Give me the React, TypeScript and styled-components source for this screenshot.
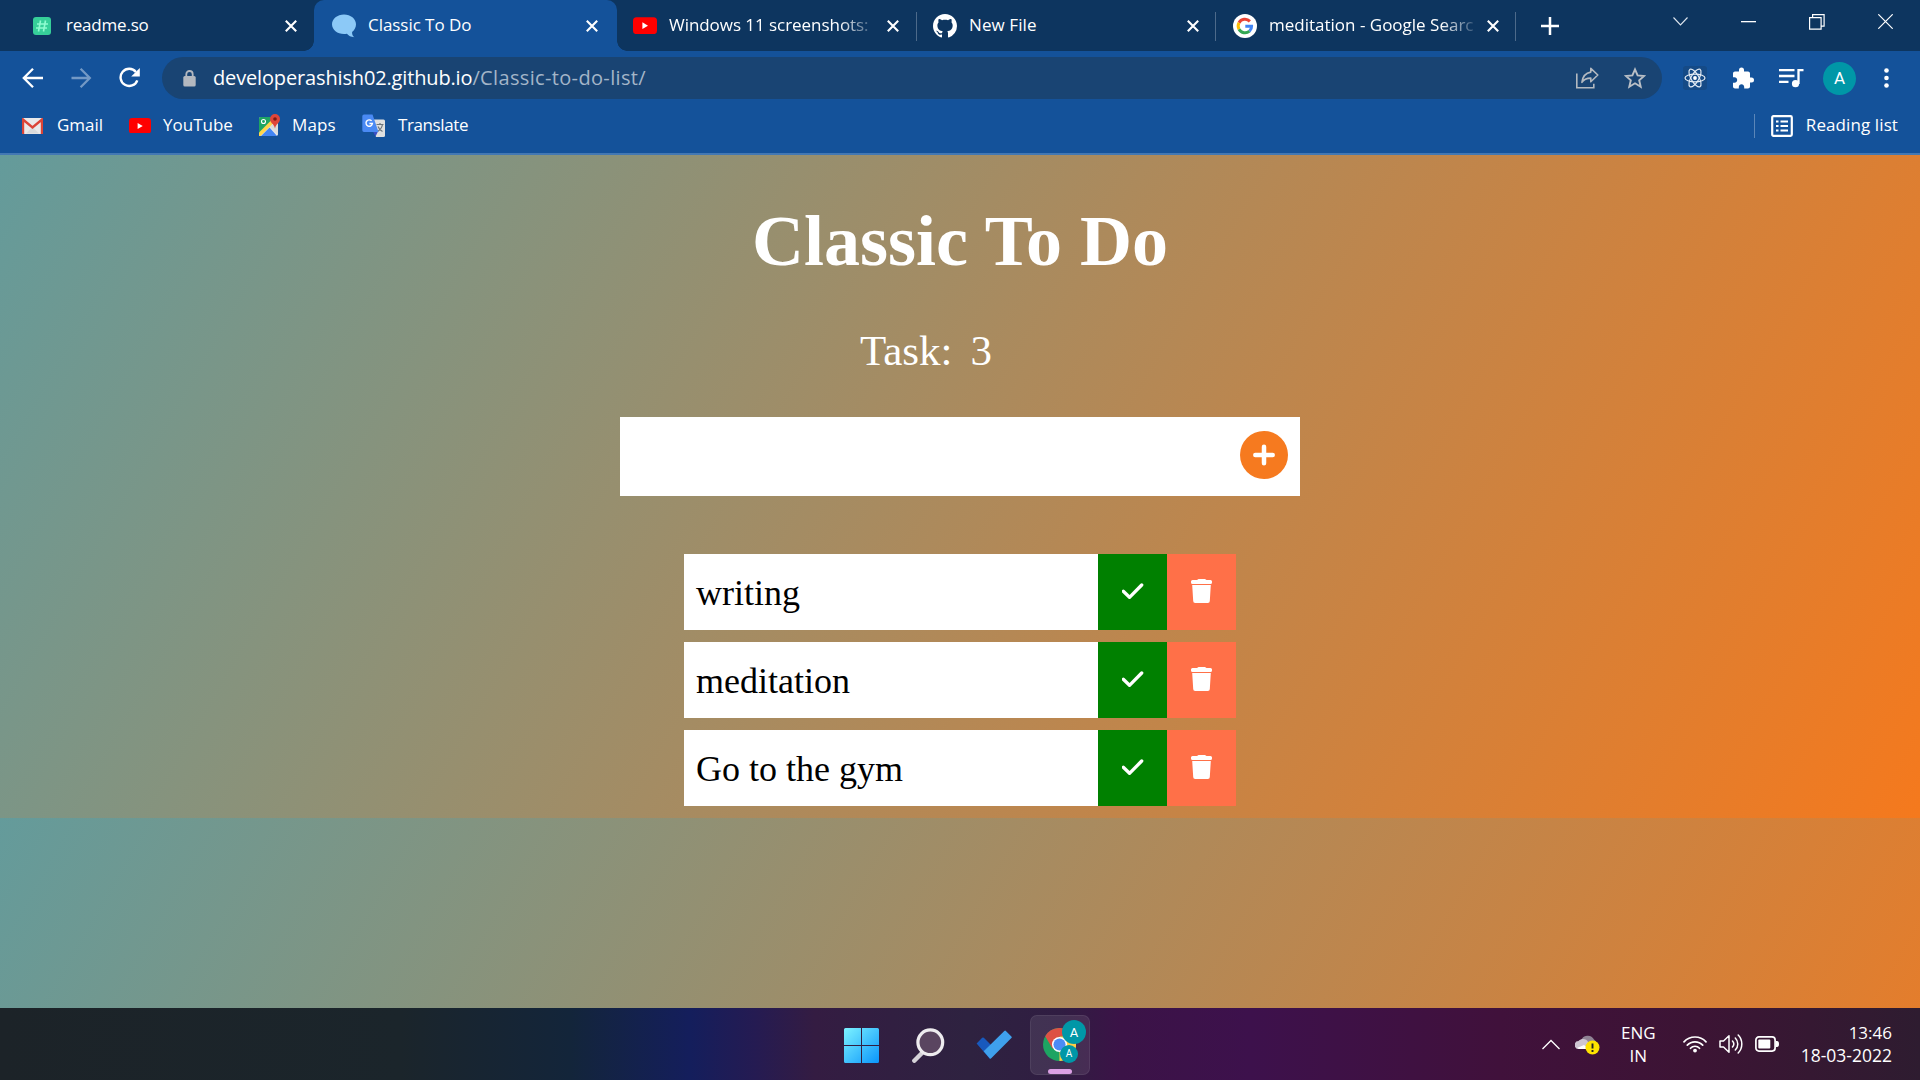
import React from "react";
import styled, { createGlobalStyle } from "styled-components";

const ui = '"Open Sans", "Noto Sans", sans-serif';
const times = '"Liberation Serif", "Times New Roman", serif';

const Global = createGlobalStyle`
  * { box-sizing: border-box; }
  html, body { margin: 0; padding: 0; background: #14529a; }
  svg { display: block; flex: none; }
`;

const Screen = styled.div`
  width: 1920px;
  height: 1080px;
  display: flex;
  flex-direction: column;
  overflow: hidden;
  font-family: ${ui};
  color: #fff;
`;

const Label = styled.span<{ $track?: number; $size?: number; $w?: number; $fade?: boolean }>`
  font-size: ${(p) => p.$size ?? 17}px;
  letter-spacing: ${(p) => p.$track ?? 0}px;
  line-height: 22px;
  padding-bottom: 1px;
  white-space: nowrap;
  flex: none;
  ${(p) => (p.$w ? `width: ${p.$w}px; overflow: hidden;` : "")}
  ${(p) => (p.$fade ? "mask-image: linear-gradient(90deg, #000 84%, transparent 104%);" : "")}
`;

const TabStrip = styled.div`
  height: 51px;
  flex: none;
  display: flex;
  background: #0d355f;
`;

const Tab = styled.div<{ $w: number; $active?: boolean; $sep?: boolean; $pad: number }>`
  position: relative;
  width: ${(p) => p.$w}px;
  height: 51px;
  flex: none;
  display: flex;
  align-items: center;
  padding-left: ${(p) => p.$pad}px;
  ${(p) =>
    p.$active
      ? `background: #14529a; border-radius: 10px 10px 0 0;
    &::before, &::after { content: ""; position: absolute; bottom: 0; width: 10px; height: 10px; }
    &::before { left: -10px; background: radial-gradient(circle at 0 0, transparent 9.5px, #14529a 10px); }
    &::after { right: -10px; background: radial-gradient(circle at 100% 0, transparent 9.5px, #14529a 10px); }`
      : ""}
  ${(p) => (p.$sep ? `&::after { content: ""; position: absolute; right: 0; top: 12px; width: 1.5px; height: 29px; background: #4d6a8a; }` : "")}
`;

const TabIcon = styled.div`
  width: 24px;
  height: 24px;
  margin-right: 12px;
  display: grid;
  place-items: center;
  flex: none;
`;

const TabTitle = styled.div`
  width: 205px;
  flex: none;
  display: flex;
`;

const CloseBox = styled.div<{ $ml?: number }>`
  width: 37px;
  display: grid;
  place-items: center;
  margin-left: ${(p) => p.$ml ?? 0}px;
`;

const WindowButtons = styled.div`
  margin-left: auto;
  display: flex;
  height: 43px;
  align-items: center;
`;

const WinButton = styled.div<{ $w: number }>`
  width: ${(p) => p.$w}px;
  display: grid;
  place-items: center;
`;

const Toolbar = styled.div`
  height: 54px;
  flex: none;
  display: flex;
  align-items: center;
  background: #14529a;
  padding-left: 20px;
`;

const ToolSlot = styled.div<{ $w: number }>`
  width: ${(p) => p.$w}px;
  height: 42px;
  flex: none;
  display: grid;
  align-items: center;
  justify-items: start;
`;

const Omnibox = styled.div`
  width: 1500px;
  height: 42px;
  border-radius: 21px;
  background: #194473;
  display: flex;
  align-items: center;
  padding: 0 16px 0 21px;
  flex: none;
  margin-right: 21px;
`;

const Url = styled.div`
  flex: 1;
  margin-left: 17px;
  display: flex;
  padding-top: 1px;
`;

const Dim = styled.span`
  color: #a3b5c8;
  letter-spacing: 0.35px;
`;

const OmniIcons = styled.div`
  display: flex;
  align-items: center;
  gap: 25px;
`;

const Extension = styled.div`
  width: 24px;
  height: 24px;
  border-radius: 3px;
  background: #154a86;
  display: grid;
  place-items: center;
`;

const Avatar = styled.div<{ $size: number; $font: number }>`
  width: ${(p) => p.$size}px;
  height: ${(p) => p.$size}px;
  border-radius: 50%;
  background: #0097a7;
  color: #fff;
  font: ${(p) => p.$font}px/1 Roboto, sans-serif;
  display: grid;
  place-items: center;
`;

const Bookmarks = styled.div`
  height: 50px;
  flex: none;
  display: flex;
  align-items: center;
  padding: 0 22px 7px 22px;
  background: #14529a;
  border-bottom: 2px solid #4378b3;
`;

const Bookmark = styled.div<{ $w: number; $gap: number }>`
  width: ${(p) => p.$w}px;
  display: flex;
  align-items: center;
  gap: ${(p) => p.$gap}px;
`;

const ReadingList = styled.div`
  margin-left: auto;
  display: flex;
  align-items: center;
  height: 24px;
  padding-left: 16px;
  gap: 13px;
  border-left: 1px solid #5b86b8;
`;

const Page = styled.main`
  height: 853px;
  flex: none;
  display: flex;
  flex-direction: column;
  align-items: center;
  font-family: ${times};
  background: linear-gradient(120deg, #649b9b, #f5791d) 0 0 / 100% 663px repeat-y;
`;

const Heading = styled.h1`
  margin: 45px 0 0;
  font-size: 72px;
  line-height: 82px;
  font-weight: 700;
`;

const Counter = styled.div`
  margin-top: 44px;
  width: 200px;
  font-size: 43px;
  line-height: 50px;
  display: flex;
  gap: 18px;
`;

const Entry = styled.div`
  margin-top: 41px;
  width: 680px;
  height: 79px;
  background: #fff;
  display: flex;
  justify-content: flex-end;
  padding: 14px 12px 0 0;
`;

const TaskList = styled.div`
  margin-top: 58px;
  display: flex;
  flex-direction: column;
  gap: 12px;
`;

const TaskRow = styled.div`
  display: flex;
  width: 552px;
  height: 76px;
  background: #fff;
`;

const TaskText = styled.div`
  width: 414px;
  padding: 18px 0 0 12px;
  font-size: 36px;
  line-height: 42px;
  color: #000;
`;

const TaskButton = styled.div<{ $color: string }>`
  width: 69px;
  display: flex;
  padding: 25px 0 0 24px;
  background: ${(p) => p.$color};
`;

const Taskbar = styled.footer`
  height: 72px;
  flex: none;
  display: grid;
  grid-template-columns: 1fr auto 1fr;
  align-items: center;
  background: linear-gradient(90deg, #1c2328 0, #1b252b 400px, #13253a 570px, #141e5c 690px, #251b52 755px, #341c42 815px, #2e2240 970px, #301d42 1060px, #3b1347 1120px, #3d114c 1250px, #40113b 1500px, #3c1434 1700px, #2e1c30 1920px);
`;

const Apps = styled.div`
  grid-column: 2;
  display: flex;
  align-items: center;
  padding: 2px 0 0 14px;
`;

const AppSlot = styled.div<{ $w: number }>`
  width: ${(p) => p.$w}px;
  height: 60px;
  display: grid;
  align-items: center;
`;

const ActiveApp = styled.div`
  position: relative;
  width: 60px;
  height: 60px;
  border-radius: 7px;
  background: rgba(255, 255, 255, 0.09);
  border: 1px solid rgba(255, 255, 255, 0.07);
  &::after {
    content: "";
    position: absolute;
    left: 17px;
    bottom: 0;
    width: 24px;
    height: 5px;
    border-radius: 3px;
    background: #dba0e4;
  }
`;

const Pin = styled.div<{ $x: number; $y: number }>`
  position: absolute;
  left: ${(p) => p.$x}px;
  top: ${(p) => p.$y}px;
`;

const Tray = styled.div`
  grid-column: 3;
  display: flex;
  align-items: center;
  justify-content: flex-end;
  padding-right: 28px;
`;

const TrayItem = styled.div<{ $mr: number; $align?: string }>`
  display: flex;
  flex-direction: column;
  align-items: ${(p) => p.$align ?? "center"};
  margin-right: ${(p) => p.$mr}px;
`;

const TrayText = styled.span<{ $size?: number }>`
  font-size: ${(p) => p.$size ?? 17}px;
  line-height: 23px;
  white-space: nowrap;
`;

const Close = () => (
  <svg width="12" height="12" viewBox="0 0 12 12" stroke="#fff" strokeWidth="2.1">
    <path d="M.8.8 11.2 11.2M11.2.8.8 11.2" />
  </svg>
);

const YouTube = ({ w = 24 }: { w?: number }) => (
  <svg width={w} height={w * 0.72} viewBox="0 0 24 17">
    <rect width="24" height="17" rx="3.5" fill="#f00" />
    <path d="M9.4 5.2 15 8.5 9.4 11.8z" fill="#fff" />
  </svg>
);

const Readme = () => (
  <svg width="24" height="24" viewBox="0 0 24 24">
    <rect x="3" y="3" width="18" height="18" rx="3" fill="#36cf99" />
    <path d="M10.5 6.5 8.5 17.5M15.5 6.5 13.5 17.5M7 10h11M6 14h11" stroke="#8ffbd0" strokeWidth="1.6" />
  </svg>
);

const Bubble = () => (
  <svg width="24" height="24" viewBox="0 0 24 24">
    <path d="M12 .6C5.400.6 0 4.900 0 10.300c0 5.500 5.400 9.800 12 9.800 1 0 2-.1 2.900-.3 1.500 1.900 4 3.300 7.500 3.400-1.900-1.300-2.400-3-2.300-5.300C22.500 16.200 24 13.500 24 10.300 24 4.900 18.600.6 12 .6z" fill="#8cc9f7" />
  </svg>
);

const GitHub = () => (
  <svg width="24" height="24" viewBox="0 0 16 16" fill="#fff">
    <path d="M8 0C3.580 0 0 3.580 0 8c0 3.540 2.290 6.530 5.470 7.590.4.070.55-.17.55-.38 0-.19-.01-.82-.01-1.490-2.010.37-2.530-.49-2.690-.94-.09-.23-.48-.94-.82-1.130-.28-.15-.68-.52-.01-.53.63-.01 1.080.58 1.230.82.72 1.210 1.870.87 2.330.66.070-.52.28-.87.51-1.070-1.780-.2-3.640-.89-3.640-3.950 0-.87.31-1.590.82-2.150-.08-.2-.36-1.020.08-2.120 0 0 .67-.21 2.200.82.64-.18 1.320-.27 2-.27s1.360.09 2 .27c1.530-1.040 2.200-.82 2.200-.82.44 1.100.16 1.920.08 2.120.51.56.82 1.270.82 2.150 0 3.070-1.870 3.750-3.650 3.950.29.25.54.73.54 1.480 0 1.070-.01 1.930-.01 2.200 0 .21.15.46.55.38A8.010 8.010 0 0 0 16 8c0-4.420-3.580-8-8-8z" />
  </svg>
);

const Google = () => (
  <svg width="24" height="24" viewBox="0 0 24 24" fill="none" strokeWidth="3">
    <circle cx="12" cy="12" r="12" fill="#fff" />
    <path d="M16.900 7.400A6.800 6.800 0 0 0 6 8.800" stroke="#ea4335" />
    <path d="M6 8.800a6.800 6.800 0 0 0 0 6.400" stroke="#fbbc05" />
    <path d="M6 15.200a6.800 6.800 0 0 0 10.500 1.900" stroke="#34a853" />
    <path d="M16.500 17.100c1.500-1.300 2.200-3 2.100-4.900H12.300" stroke="#4285f4" />
  </svg>
);

const NavArrow = ({ flip }: { flip?: boolean }) => (
  <svg width="26" height="26" viewBox="0 0 26 26" fill="none" stroke={flip ? "#7399c5" : "#fff"} strokeWidth="2.3">
    <path d={flip ? "M2.500 13h18M11.600 3.800 20.800 13 11.600 22.200" : "M23 13H4.500M13 3.800 3.800 13 13 22.200"} />
  </svg>
);

const Reload = () => (
  <svg width="22" height="22" viewBox="0 0 22 22">
    <path d="M18.300 13.300A8.600 8.600 0 1 1 16.900 5" fill="none" stroke="#fff" strokeWidth="2.400" />
    <path d="M20.800 1v8.600h-8.600z" fill="#fff" />
  </svg>
);

const Lock = () => (
  <svg width="13" height="17" viewBox="0 0 13 17">
    <path d="M3.300 7V4.200a3.200 3.200 0 0 1 6.400 0V7" fill="none" stroke="#b3b8bf" strokeWidth="1.800" />
    <rect x=".3" y="6" width="12.400" height="10.500" rx="1.500" fill="#b3b8bf" />
  </svg>
);

const Share = () => (
  <svg width="24" height="24" viewBox="0 0 24 24" fill="none" stroke="#b3b9c0" strokeWidth="1.600">
    <path d="M1.800 7.500v14.200h17v-4" />
    <path d="M15.800 2.300 22.800 9l-7 6.800v-3.700c-4.300 0-7 1-8.900 4.200.7-5.700 4-9.400 8.900-10.200z" strokeLinejoin="round" />
  </svg>
);

const Star = () => (
  <svg width="22" height="22" viewBox="0 0 22 22" fill="none" stroke="#b9bfc6" strokeWidth="1.900">
    <path d="M11 2.400l2.600 6 6.500.6-4.900 4.300 1.500 6.400-5.700-3.400-5.700 3.400 1.500-6.400L1.900 9l6.500-.6z" />
  </svg>
);

const ReactMark = () => (
  <svg width="22" height="22" viewBox="0 0 22 22" fill="none" stroke="#e6edf5" strokeWidth="1.200">
    <ellipse cx="11" cy="11" rx="10" ry="3.900" />
    <ellipse cx="11" cy="11" rx="10" ry="3.900" transform="rotate(60 11 11)" />
    <ellipse cx="11" cy="11" rx="10" ry="3.900" transform="rotate(120 11 11)" />
    <circle cx="11" cy="11" r="1.900" fill="#fff" stroke="none" />
  </svg>
);

const Puzzle = () => (
  <svg width="23" height="23" viewBox="1 0.5 23 23" fill="#fff">
    <path d="M20.500 11H19V7c0-1.100-.9-2-2-2h-4V3.500a2.500 2.500 0 0 0-5 0V5H4c-1.100 0-1.990.9-1.990 2v3.800H3.500c1.490 0 2.700 1.210 2.700 2.700s-1.210 2.700-2.700 2.700H2V20c0 1.100.9 2 2 2h3.800v-1.500c0-1.490 1.210-2.700 2.700-2.700s2.700 1.210 2.700 2.700V22H17c1.100 0 2-.9 2-2v-4h1.500a2.500 2.500 0 0 0 0-5z" />
  </svg>
);

const Media = () => (
  <svg width="25" height="20" viewBox="0 0 25 20" fill="none" stroke="#fff" strokeWidth="2.300">
    <path d="M0 2.200h15.500M0 8h15.500M0 13.800h9.500M19.500 16V2.200h5" />
    <circle cx="16.500" cy="15.700" r="3.600" fill="#fff" stroke="none" />
  </svg>
);

const Gmail = () => (
  <svg width="21" height="16" viewBox="0 0 21 16">
    <rect width="21" height="16" rx="1.500" fill="#e9e9ea" />
    <path d="M4 15.500 10.500 9 17 15.500" fill="#d9dadb" />
    <path d="M1 16V1.500L10.500 9.500l9.500-8V16" fill="none" stroke="#db4437" strokeWidth="2.400" />
  </svg>
);

const Maps = () => (
  <svg width="22" height="24" viewBox="0 0 22 24">
    <rect x="1" y="3" width="19" height="19" rx="2" fill="#e8e8e8" />
    <path d="M1 4.500Q1 3 2.500 3H18L1 20z" fill="#1fa463" />
    <path d="M20 8v13L11.500 12.500z" fill="#dcdcdc" />
    <path d="M3 22 11.500 13.500 19 22z" fill="#4285f4" />
    <path d="M1 18.500 14 5.500l2.500 2.500L2.500 22H1z" fill="#ffd54b" />
    <circle cx="5.500" cy="7.500" r="2" fill="none" stroke="#fff" strokeWidth="1.100" />
    <path d="M17 0a5 5 0 0 0-5 5c0 4 4 4.500 5 9.500 1-5 5-5.500 5-9.500a5 5 0 0 0-5-5z" fill="#e0453a" />
    <circle cx="17" cy="5" r="1.800" fill="#7c1b13" />
  </svg>
);

const Translate = () => (
  <svg width="24" height="24" viewBox="0 0 24 24">
    <path d="M9 5.500h12.500A1.500 1.500 0 0 1 23 7v14.500a1.500 1.500 0 0 1-1.500 1.500H14z" fill="#e0e0e0" />
    <path d="M14.500 10.500h7M18 9v1.500M20.500 10.500c-.6 3-2.500 5.500-5 7M16 12.500c1 2.500 2.500 4 4.500 5" fill="none" stroke="#6b747a" strokeWidth="1.200" />
    <path d="M11 17.500h5L13.500 22.500z" fill="#3b4fc4" />
    <path d="M2 .5h8.500L16.500 18H2A1.700 1.700 0 0 1 .3 16.300V2.200A1.700 1.700 0 0 1 2 .5z" fill="#4a8af4" />
    <path d="M9.600 6.900A3.200 3.200 0 1 0 10.400 9.500H7.400" fill="none" stroke="#fff" strokeWidth="1.400" />
  </svg>
);

const ReadingIcon = () => (
  <svg width="22" height="22" viewBox="0 0 22 22" fill="none" stroke="#fff">
    <rect x="1.200" y="1.200" width="19.600" height="19.600" rx="1.200" strokeWidth="2.200" />
    <path d="M5 6.500h2.500M5 11h2.500M5 15.500h2.500M9.500 6.500H17M9.500 11H17M9.500 15.500H17" strokeWidth="2.200" />
  </svg>
);

const AddIcon = () => (
  <svg width="48" height="48" viewBox="0 0 48 48">
    <circle cx="24" cy="24" r="24" fill="#f67a1f" />
    <path d="M24 15.700v16.600M15.300 24h17.400" stroke="#fff" strokeWidth="4.500" strokeLinecap="round" />
  </svg>
);

const CheckIcon = () => (
  <svg width="22" height="24" viewBox="0 0 22 24">
    <path d="M1.300 12.300 7.500 18.300 19.700 6" fill="none" stroke="#fff" strokeWidth="3.300" strokeLinecap="round" strokeLinejoin="round" />
  </svg>
);

const TrashIcon = () => (
  <svg width="22" height="24" viewBox="0 0 22 24" fill="#fff">
    <path d="M1.500 1H6L7.500 0h6.500l1.500 1H19.500A1.500 1.500 0 0 1 21 2.500v1A1.500 1.500 0 0 1 19.500 5h-18A1.500 1.500 0 0 1 0 3.500v-1A1.500 1.500 0 0 1 1.500 1z" />
    <path d="M1.200 6h18.600l-1 16a2 2 0 0 1-2 2H4.200a2 2 0 0 1-2-2z" />
  </svg>
);

const WindowsLogo = () => (
  <svg width="35" height="35" viewBox="0 0 35 35">
    <defs>
      <linearGradient id="win" x1="0" y1="0" x2="1" y2="1">
        <stop offset="0" stopColor="#7df3ff" />
        <stop offset="1" stopColor="#0a95fb" />
      </linearGradient>
    </defs>
    <path d="M1.500 0H17v17H0V1.500A1.500 1.500 0 0 1 1.500 0zM18 0h15.500A1.500 1.500 0 0 1 35 1.500V17H18zM0 18h17v17H1.500A1.500 1.500 0 0 1 0 33.500zM18 18h17v15.500a1.500 1.500 0 0 1-1.500 1.500H18z" fill="url(#win)" />
  </svg>
);

const SearchIcon = () => (
  <svg width="33" height="35" viewBox="0 0 33 35">
    <path d="M10.500 24.500 2.300 32.700" stroke="#d5d2d8" strokeWidth="4.400" strokeLinecap="round" />
    <circle cx="18.300" cy="14.300" r="12.400" fill="#5a4560" stroke="#eeecef" strokeWidth="3.200" />
  </svg>
);

const ToDoLogo = () => (
  <svg width="36" height="30" viewBox="0 0 36 30">
    <path d="M.6 13.500 6.200 7.800q.8-.8 1.600 0L21 21l-7 8z" fill="#1859bd" />
    <path d="M7.700 21.200 28.300.9q.8-.8 1.600 0l5.500 5.500q.8.800 0 1.600L15.200 28.300q-.8.800-1.600 0z" fill="#3fa0ec" />
  </svg>
);

const ChromeLogo = () => (
  <svg width="33" height="33" viewBox="0 0 48 48">
    <circle cx="24" cy="24" r="24" fill="#1da462" />
    <path d="M24 24 24 48A24 24 0 0 0 44.800 12L24 12z" fill="#ffcd46" />
    <path d="M3.200 12 14 30 24 12h20.800A24 24 0 0 0 3.200 12z" fill="#dd5144" />
    <circle cx="24" cy="24" r="11" fill="#fff" />
    <circle cx="24" cy="24" r="8.800" fill="#4c8bf5" />
  </svg>
);

const Cloud = () => (
  <svg width="25" height="21" viewBox="0 0 25 21">
    <path d="M6 7a7 7 0 0 1 13-1.500A4 4 0 0 1 18 13H8z" fill="#8f8394" />
    <path d="M4 15a4 4 0 0 1-.5-8C7 3.500 12 5 13 8l5 2v5z" fill="#cfc6d2" />
    <path d="M2 14l7-3 5 4H4z" fill="#fff" />
    <circle cx="17.500" cy="13.500" r="7" fill="#ffe200" />
    <path d="M17.500 9.500v5M17.500 16v2" stroke="#222" strokeWidth="1.900" />
  </svg>
);

const Wifi = () => (
  <svg width="24" height="18" viewBox="0 0 24 18" fill="none" stroke="#fff" strokeWidth="1.700" strokeLinecap="round">
    <path d="M1 6.800a15 15 0 0 1 22 0M4.300 10.200a10.500 10.500 0 0 1 15.400 0M7.500 13.300a6 6 0 0 1 9 0" />
    <circle cx="12" cy="15.600" r="1.900" fill="#fff" stroke="none" />
  </svg>
);

const Volume = () => (
  <svg width="24" height="20" viewBox="0 0 24 20" fill="none" stroke="#fff" strokeWidth="1.500" strokeLinejoin="round" strokeLinecap="round">
    <path d="M1 7h3.500L10 1.800v16.400L4.500 13H1z" />
    <path d="M13.500 7a4.500 4.500 0 0 1 0 6M16.300 4a8.500 8.500 0 0 1 0 12M19.200 1a13 13 0 0 1 0 18" />
  </svg>
);

const Battery = () => (
  <svg width="24" height="16" viewBox="0 0 24 16">
    <rect x=".9" y=".9" width="19.200" height="14.200" rx="3" fill="none" stroke="#fff" strokeWidth="1.700" />
    <rect x="3.300" y="3.500" width="12" height="9" rx="1" fill="#fff" />
    <path d="M21 5h1q2 0 2 3t-2 3h-1z" fill="#fff" />
  </svg>
);

const tasks = ["writing", "meditation", "Go to the gym"];

export default function App() {
  return (
    <Screen>
      <Global />
      <TabStrip>
        <Tab $w={314} $pad={30}>
          <TabIcon><Readme /></TabIcon>
          <TabTitle><Label $track={-0.2}>readme.so</Label></TabTitle>
          <CloseBox $ml={1}><Close /></CloseBox>
        </Tab>
        <Tab $w={303} $pad={18} $active>
          <TabIcon><Bubble /></TabIcon>
          <TabTitle><Label $track={-0.05}>Classic To Do</Label></TabTitle>
          <CloseBox><Close /></CloseBox>
        </Tab>
        <Tab $w={300} $pad={16} $sep>
          <TabIcon><YouTube /></TabIcon>
          <TabTitle><Label $w={202} $track={-0.05} $fade>Windows 11 screenshots:</Label></TabTitle>
          <CloseBox><Close /></CloseBox>
        </Tab>
        <Tab $w={299} $pad={16} $sep>
          <TabIcon><GitHub /></TabIcon>
          <TabTitle><Label $track={0.1}>New File</Label></TabTitle>
          <CloseBox><Close /></CloseBox>
        </Tab>
        <Tab $w={300} $pad={17} $sep>
          <TabIcon><Google /></TabIcon>
          <TabTitle><Label $w={204} $fade>meditation - Google Search</Label></TabTitle>
          <CloseBox><Close /></CloseBox>
        </Tab>
        <CloseBox $ml={15}>
          <svg width="18" height="18" viewBox="0 0 18 18" stroke="#fff" strokeWidth="2.500"><path d="M9 0v18M0 9h18" /></svg>
        </CloseBox>
        <WindowButtons>
          <WinButton $w={68}>
            <svg width="15" height="9" viewBox="0 0 15 9" fill="none" stroke="#dfe6ee" strokeWidth="1.100"><path d="M.5.5l7 7.500 7-7.500" /></svg>
          </WinButton>
          <WinButton $w={68}>
            <svg width="15" height="2" viewBox="0 0 15 2"><rect width="15" height="1.300" fill="#fff" /></svg>
          </WinButton>
          <WinButton $w={69}>
            <svg width="16" height="16" viewBox="0 0 16 16" fill="none" stroke="#fff" strokeWidth="1.200"><path d="M.6 3.600h11.500v11.500H.6zM3.600 3.600V.6h11.500v11.500h-3" /></svg>
          </WinButton>
          <WinButton $w={69}>
            <svg width="15" height="15" viewBox="0 0 15 15" stroke="#fff" strokeWidth="1.200"><path d="M.3.3l14.400 14.400M14.700.3.300 14.700" /></svg>
          </WinButton>
        </WindowButtons>
      </TabStrip>

      <Toolbar>
        <ToolSlot $w={49}><NavArrow /></ToolSlot>
        <ToolSlot $w={50}><NavArrow flip /></ToolSlot>
        <ToolSlot $w={43}><Reload /></ToolSlot>
        <Omnibox>
          <Lock />
          <Url><Label $size={20} $track={-0.15}>developerashish02.github.io<Dim>/Classic-to-do-list/</Dim></Label></Url>
          <OmniIcons><Share /><Star /></OmniIcons>
        </Omnibox>
        <ToolSlot $w={49}><Extension><ReactMark /></Extension></ToolSlot>
        <ToolSlot $w={47}><Puzzle /></ToolSlot>
        <ToolSlot $w={44}><Media /></ToolSlot>
        <ToolSlot $w={61}><Avatar $size={33} $font={17}>A</Avatar></ToolSlot>
        <svg width="5" height="20" viewBox="0 0 5 20" fill="#fff"><circle cx="2.500" cy="2.500" r="2.300" /><circle cx="2.500" cy="10" r="2.300" /><circle cx="2.500" cy="17.500" r="2.300" /></svg>
      </Toolbar>

      <Bookmarks>
        <Bookmark $w={107} $gap={14}><Gmail /><Label>Gmail</Label></Bookmark>
        <Bookmark $w={129} $gap={12}><YouTube w={22} /><Label>YouTube</Label></Bookmark>
        <Bookmark $w={104} $gap={12}><Maps /><Label $track={0.1}>Maps</Label></Bookmark>
        <Bookmark $w={120} $gap={12}><Translate /><Label $track={-0.4}>Translate</Label></Bookmark>
        <ReadingList><ReadingIcon /><Label $track={0.1}>Reading list</Label></ReadingList>
      </Bookmarks>

      <Page>
        <Heading>Classic To Do</Heading>
        <Counter><span>Task:</span><span>3</span></Counter>
        <Entry><AddIcon /></Entry>
        <TaskList>
          {tasks.map((t) => (
            <TaskRow key={t}>
              <TaskText>{t}</TaskText>
              <TaskButton $color="#008000"><CheckIcon /></TaskButton>
              <TaskButton $color="#ff7048"><TrashIcon /></TaskButton>
            </TaskRow>
          ))}
        </TaskList>
      </Page>

      <Taskbar>
        <Apps>
          <AppSlot $w={68}><WindowsLogo /></AppSlot>
          <AppSlot $w={64}><SearchIcon /></AppSlot>
          <AppSlot $w={54}><ToDoLogo /></AppSlot>
          <ActiveApp>
            <Pin $x={12} $y={12}><ChromeLogo /></Pin>
            <Pin $x={31} $y={4}><Avatar $size={24} $font={13}>A</Avatar></Pin>
            <Pin $x={29} $y={29}><Avatar $size={18} $font={10}>A</Avatar></Pin>
          </ActiveApp>
        </Apps>
        <Tray>
          <TrayItem $mr={15}>
            <svg width="18" height="11" viewBox="0 0 18 11" fill="none" stroke="#fff" strokeWidth="1.300"><path d="M.5 10 9 1.500l8.500 8.500" /></svg>
          </TrayItem>
          <TrayItem $mr={21}><Cloud /></TrayItem>
          <TrayItem $mr={27}><TrayText>ENG</TrayText><TrayText>IN</TrayText></TrayItem>
          <TrayItem $mr={12}><Wifi /></TrayItem>
          <TrayItem $mr={12}><Volume /></TrayItem>
          <TrayItem $mr={22}><Battery /></TrayItem>
          <TrayItem $mr={0} $align="flex-end"><TrayText>13:46</TrayText><TrayText $size={17.5}>18-03-2022</TrayText></TrayItem>
        </Tray>
      </Taskbar>
    </Screen>
  );
}
